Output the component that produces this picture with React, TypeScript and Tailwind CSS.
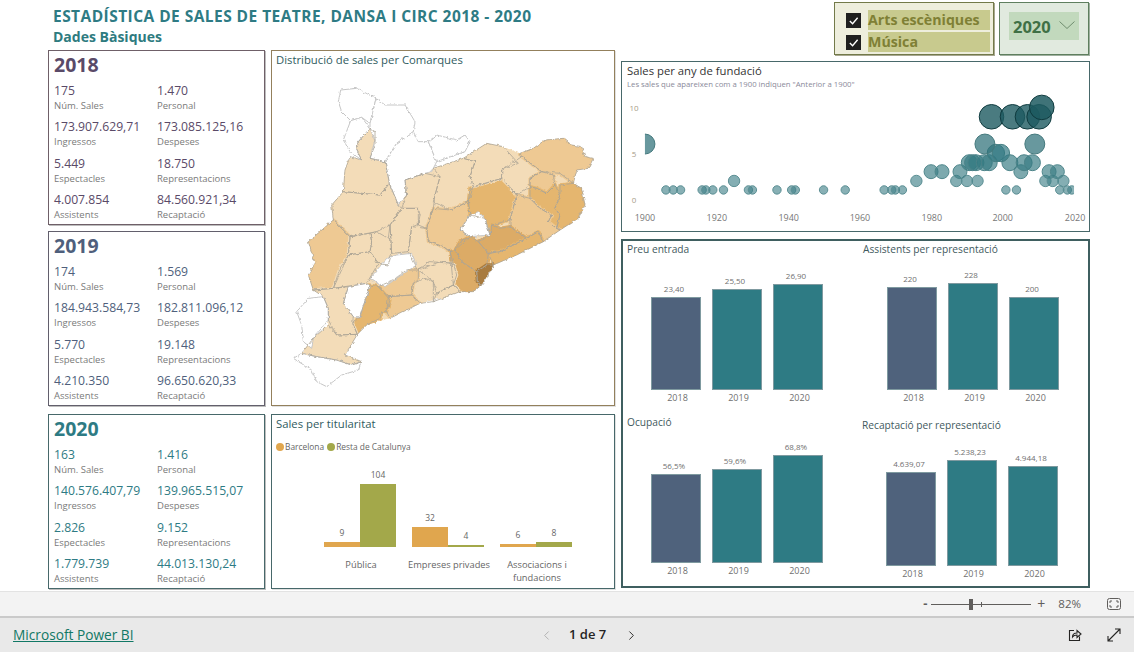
import { ChevronLeft, ChevronRight } from 'lucide-react';

type Kpi = { value: string; label: string };

type YearCard = {
  year: string;
  rows: Kpi[][];
};

const LIGHT = '#f3dcb8';
const MEDIUM = '#eec993';
const DARK = '#e5b66f';
const DARKER = '#dcab66';
const DARKEST = '#a87b3f';
const NONE = '#ffffff';

function kpis(v: string[]): Kpi[][] {
  return [
    [{ value: v[0], label: 'Núm. Sales' }, { value: v[1], label: 'Personal' }],
    [{ value: v[2], label: 'Ingressos' }, { value: v[3], label: 'Despeses' }],
    [{ value: v[4], label: 'Espectacles' }, { value: v[5], label: 'Representacions' }],
    [{ value: v[6], label: 'Assistents' }, { value: v[7], label: 'Recaptació' }],
  ];
}

const card2018: YearCard = {
  year: '2018',
  rows: kpis(['175', '1.470', '173.907.629,71', '173.085.125,16', '5.449', '18.750', '4.007.854', '84.560.921,34']),
};
const card2019: YearCard = {
  year: '2019',
  rows: kpis(['174', '1.569', '184.943.584,73', '182.811.096,12', '5.770', '19.148', '4.210.350', '96.650.620,33']),
};
const card2020: YearCard = {
  year: '2020',
  rows: kpis(['163', '1.416', '140.576.407,79', '139.965.515,07', '2.826', '9.152', '1.779.739', '44.013.130,24']),
};

// neighbouring shapes were traced apart, so pull close vertices onto one point
const knownVertices: [number, number][] = [];
function snap(points: string): string {
  return points
    .split(' ')
    .map((pair) => {
      const [x, y] = pair.split(',').map(Number);
      const hit = knownVertices.find(([kx, ky]) => Math.hypot(kx - x, ky - y) < 11);
      if (hit) return hit.join(',');
      knownVertices.push([x, y]);
      return pair;
    })
    .join(' ');
}

// comarques, traced by hand from the map
const regions: [string, string][] = (
  [
    [LIGHT, '300,250 315,260 315,300 300,340 345,350 355,395 358,415 330,450 220,440 225,375 240,335 275,345 260,315 265,290'],
    [LIGHT, '490,370 580,340 615,350 600,395 610,425 595,470 540,495 510,480 490,470 510,395'],
    [LIGHT, '405,405 465,385 510,395 495,450 490,490 470,550 445,540 445,490 395,490 410,450'],
    [LIGHT, '220,440 330,450 358,415 385,480 395,490 360,540 355,580 320,560 240,575 190,525 185,480'],
    [MEDIUM, '190,525 240,580 235,630 190,730 130,735 115,690 135,655 115,590'],
    [LIGHT, '240,575 300,565 305,590 300,620 240,630'],
    [LIGHT, '300,565 325,560 360,545 365,625 355,660 325,655 300,620 310,590'],
    [LIGHT, '360,540 395,490 445,490 450,510 445,540 425,545 415,620 360,628 365,625'],
    [LIGHT, '240,630 300,620 325,655 290,715 190,730 210,670'],
    [LIGHT, '430,545 470,550 475,590 520,605 540,620 550,655 510,650 445,675 415,615'],
    [MEDIUM, '490,490 540,495 595,470 600,510 570,555 600,575 555,615 540,620 520,605 475,590 470,550'],
    [DARK, '600,430 695,400 740,450 720,525 665,540 660,570 650,570 645,520 600,500 595,470'],
    [LIGHT, '585,345 650,295 700,305 745,355 695,375 695,400 610,415 600,395 610,350'],
    [LIGHT, '695,375 755,335 815,380 780,400 780,425 750,450 715,420 695,400'],
    [MEDIUM, '750,325 790,310 825,285 880,280 905,300 935,305 945,335 970,340 955,370 920,375 910,415 870,385 815,385 755,335'],
    [MEDIUM, '780,400 815,385 850,390 855,420 830,445 800,430 780,425'],
    [DARK, '780,430 800,430 830,445 855,420 870,450 855,490 870,510 860,550 835,530 845,510 810,490 780,460'],
    [DARK, '870,420 910,415 935,430 945,480 925,520 870,555 860,550 870,510 855,490 870,450'],
    [MEDIUM, '750,450 780,460 810,490 845,510 835,530 860,550 870,555 820,590 805,560 770,580 720,545 720,525'],
    [DARKER, '665,540 690,550 720,545 770,580 730,600 690,620 655,625 625,590 660,570'],
    [DARK, '770,580 805,560 820,590 740,630 670,660 655,630 690,620 730,600'],
    [DARKER, '570,590 600,575 625,590 655,625 650,660 620,680 575,650 555,620'],
    [DARKER, '540,620 555,620 575,650 620,680 622,710 635,720 610,740 570,740 550,720'],
    [DARKEST, '650,665 670,660 650,700 635,720 622,710 625,685'],
    [LIGHT, '445,680 480,650 555,660 560,690 550,720 500,745 490,710'],
    [LIGHT, '500,745 550,720 575,740 530,755 490,770'],
    [LIGHT, '430,715 465,700 490,720 495,765 450,775 425,750'],
    [MEDIUM, '325,725 370,705 410,675 445,675 445,700 425,720 420,755 355,755'],
    [MEDIUM, '355,765 420,755 450,775 420,790 360,820 350,800'],
    [DARK, '300,720 325,725 360,765 350,800 335,800 330,820 290,840 262,868 248,835 270,815'],
    [LIGHT, '130,735 190,730 235,725 220,775 250,815 248,835 262,868 200,870 175,825 175,790 160,755'],
    [LIGHT, '130,880 175,840 200,870 265,868 225,930 275,950 245,960 200,945 140,935 95,925'],
    [NONE, '212,135 260,130 318,160 300,235 275,217 242,227 215,200 205,170'],
    [NONE, '318,160 345,180 405,180 435,230 430,260 380,295 345,350 300,340 315,285 300,245 300,235'],
    [NONE, '242,227 275,217 300,240 265,290 260,315 275,345 240,320 220,285'],
    [NONE, '430,260 445,290 475,290 500,350 485,380 460,385 405,405 415,450 385,480 355,415 350,355 380,295'],
    [NONE, '475,290 500,270 560,285 585,270 600,290 585,320 510,350 500,350'],
    [NONE, '600,510 625,500 645,520 650,570 662,573 600,575 570,555'],
    [NONE, '300,700 350,640 380,630 425,625 440,660 380,700 345,725 315,710'],
    [NONE, '235,725 290,715 300,725 270,810 250,815 220,775'],
    [NONE, '115,760 160,755 175,790 175,825 125,880 125,910 100,890 95,840 80,800'],
    [NONE, '70,940 95,925 140,935 200,945 245,960 275,950 265,975 215,990 170,1025 140,1010 125,975'],
  ] as [string, string][]
).map(([fill, points]) => [fill, snap(points)]);

// outer edge of the coloured comarques
const silhouette = snap(
  '300,250 315,260 315,300 300,340 345,350 355,395 385,480 405,405 465,385 490,370 580,340 585,345 650,295 700,305 750,325 790,310 825,285 880,280 905,300 935,305 945,335 970,340 955,370 920,375 910,415 935,430 945,480 925,520 870,555 820,590 740,630 670,660 635,720 610,740 570,740 530,755 450,775 420,790 360,820 290,840 262,868 225,930 275,950 245,960 200,945 140,935 95,925 130,880 175,840 175,790 160,755 130,735 115,690 135,655 115,590 190,525 185,480 220,440 225,375 240,335 275,345 260,315 265,290',
);

const colouredRegions = regions.filter(([fill]) => fill !== NONE);
const emptyRegions = regions.filter(([fill]) => fill === NONE);

// bubble chart rows, one per number of sales
const bubbleRows: { y: number; r: number; fill: string; opacity: number; stroke: string; xs: number[] }[] = [
  { y: 190, r: 4.2, fill: '#3f8088', opacity: 0.62, stroke: '#5b8f94', xs: [666, 673.3, 680.7, 702.3, 706, 713, 723.7, 748.7, 752.7, 777.3, 792, 795.7, 824, 845.7, 884.7, 892.3, 896, 903, 1006.7, 1017.3, 1060.7, 1068.3, 1072.7] },
  { y: 181, r: 5.7, fill: '#3f8088', opacity: 0.64, stroke: '#5b8f94', xs: [734.3, 917, 957, 967.7, 978.3, 1046.3, 1053.7, 1064.3] },
  { y: 171.7, r: 7, fill: '#3a7c84', opacity: 0.66, stroke: '#4f878c', xs: [931.7, 942.7, 960.7, 1021.7, 1050, 1058.3] },
  { y: 162.7, r: 8, fill: '#357a82', opacity: 0.68, stroke: '#4a8288', xs: [970, 973.3, 976.7, 985, 990, 1010.7, 1025, 1033.3] },
  { y: 153, r: 8.7, fill: '#317881', opacity: 0.7, stroke: '#447d82', xs: [996.7, 1001.7] },
  { y: 144, r: 10, fill: '#2e7079', opacity: 0.72, stroke: '#44787c', xs: [645, 985.7, 1035.7] },
  { y: 116.7, r: 12.3, fill: '#1d5a60', opacity: 0.8, stroke: '#0f3a3e', xs: [992.3, 1013.3, 1028.3, 1040] },
  { y: 107.3, r: 12.3, fill: '#1d5a60', opacity: 0.85, stroke: '#0f3a3e', xs: [1042.7] },
];

function KpiCard({ card, border, valueColor }: { card: YearCard; border: string; valueColor: string }) {
  return (
    <div className={`h-[175px] w-[217px] border px-[5px] pt-[2px] shadow-[1px_1px_0_#bdbdbd] ${border} ${valueColor}`}>
      <div className="h-[27px] text-[19.5px] leading-[24px] font-bold">{card.year}</div>
      <div className="mt-[1px] flex flex-col">
        {card.rows.map((row) => (
          <div key={row[0].label} className="grid h-[36.3px] grid-cols-[103px_1fr]">
            {row.map((kpi) => (
              <div key={kpi.label}>
                <div className="h-[19px] text-[12.2px] leading-[19px] whitespace-nowrap">{kpi.value}</div>
                <div className="text-[9.5px] leading-[12px] whitespace-nowrap text-[#7a7a7a]">{kpi.label}</div>
              </div>
            ))}
          </div>
        ))}
      </div>
    </div>
  );
}

function MapPanel() {
  return (
    <div className="h-[356px] border border-[#93805c] shadow-[1px_1px_0_#e0e0e0]">
      <div className="h-[22px] pl-[4px] text-[11.3px] leading-[18px] text-[#2f5b60]">Distribució de sales per Comarques</div>
      <svg viewBox="6 84 1023 996" className="block h-[332px] w-[341px]">
        <defs>
          <filter id="rough" x="-5%" y="-5%" width="110%" height="110%" colorInterpolationFilters="sRGB">
            <feTurbulence type="fractalNoise" baseFrequency="0.09" numOctaves="2" seed="4" result="noise" />
            <feDisplacementMap in="SourceGraphic" in2="noise" scale="10" xChannelSelector="R" yChannelSelector="G" />
            <feGaussianBlur stdDeviation="0.9" />
          </filter>
          <clipPath id="land">
            <polygon points={silhouette} />
          </clipPath>
        </defs>
        <g filter="url(#rough)" strokeLinejoin="round">
          {/* wide strokes close the small gaps between the traced shapes */}
          <g clipPath="url(#land)">
            <polygon points={silhouette} fill={LIGHT} />
            {colouredRegions.map(([fill, points]) => (
              <polygon key={points} points={points} fill={fill} stroke={fill} strokeWidth={10} />
            ))}
          </g>
          {emptyRegions.map(([, points]) => (
            <polygon key={points} points={points} fill={NONE} stroke="#c6c6c6" strokeWidth={3} />
          ))}
          {colouredRegions.map(([, points]) => (
            <polygon key={points} points={points} fill="none" stroke="#aca496" strokeWidth={2.4} />
          ))}
        </g>
      </svg>
    </div>
  );
}

function OwnershipPanel() {
  const groups = [
    { name: ['Pública'], a: 5, b: 63, av: '9', bv: '104' },
    { name: ['Empreses privades'], a: 20, b: 2.5, av: '32', bv: '4' },
    { name: ['Associacions i', 'fundacions'], a: 3.5, b: 5, av: '6', bv: '8' },
  ];
  return (
    <div className="mt-2 flex h-[175px] flex-col border border-[#47686a] shadow-[1px_1px_0_#e0e0e0]">
      <div className="h-[20px] pl-[4px] text-[11.3px] leading-[18px] text-[#2f5b60]">Sales per titularitat</div>
      <div className="mt-[3px] flex h-[18px] items-center pl-[4px] text-[8.4px] text-[#666]">
        <span className="mr-px h-2 w-2 rounded-full bg-[#e0a64e]" />
        <span className="mr-[3px]">Barcelona</span>
        <span className="mr-px h-2 w-2 rounded-full bg-[#a3a84a]" />
        <span>Resta de Catalunya</span>
      </div>
      <div className="ml-[52px] flex gap-[16px]">
        {groups.map((g) => (
          <div key={g.name[0]} className="w-[72px]">
            <div className="flex h-[91px] items-end">
              {[
                { h: g.a, v: g.av, color: 'bg-[#e0a64e]' },
                { h: g.b, v: g.bv, color: 'bg-[#a3a84a]' },
              ].map((bar) => (
                <div key={bar.color} className="w-[36px]">
                  <div className="mb-[4px] text-center text-[8.5px] leading-[11px] text-[#666]">{bar.v}</div>
                  <div className={bar.color} style={{ height: bar.h }} />
                </div>
              ))}
            </div>
            <div className="-mx-3 mt-[11px] pl-[2px] text-center text-[9.3px] leading-[13px] whitespace-nowrap text-[#666]">
              {g.name.map((line) => (
                <div key={line}>{line}</div>
              ))}
            </div>
          </div>
        ))}
      </div>
    </div>
  );
}

function FoundationPanel() {
  const years = [
    [645, '1900'],
    [717, '1920'],
    [789, '1940'],
    [860.5, '1960'],
    [932.5, '1980'],
    [1003.5, '2000'],
    [1076, '2020'],
  ] as const;
  return (
    <div className="h-[171px] border-[1.5px] border-[#47686a] bg-white">
      <div className="h-[28px] pl-[5px]">
        <div className="h-[16px] text-[11.3px] leading-[18px] text-[#333]">Sales per any de fundació</div>
        <div className="text-[7.75px] leading-[12px] whitespace-nowrap text-[#8a8a9a]">Les sales que apareixen com a 1900 indiquen "Anterior a 1900"</div>
      </div>
      <svg viewBox="622 90 467 141" className="block h-[141px] w-[466px]">
        <defs>
          <clipPath id="plot">
            <rect x="645" y="90" width="430" height="120" />
          </clipPath>
        </defs>
        {[
          [107.5, '10'],
          [154, '5'],
          [200.5, '0'],
        ].map(([y, label]) => (
          <text key={label} x="634" y={Number(y) + 3} fontSize="8" textAnchor="middle" fill="#a79c88">
            {label}
          </text>
        ))}
        {years.map(([x, label]) => (
          <text key={label} x={x} y="221.5" fontSize="9" textAnchor="middle" fill="#777">
            {label}
          </text>
        ))}
        <g clipPath="url(#plot)">
          {bubbleRows.flatMap((row) =>
            row.xs.map((x) => (
              <circle
                key={`${row.y}-${x}`}
                cx={x}
                cy={row.y}
                r={row.r}
                fill={row.fill}
                fillOpacity={row.opacity}
                stroke={row.stroke}
                strokeWidth={1}
              />
            )),
          )}
        </g>
      </svg>
    </div>
  );
}

type Bar = { year: string; label: string; height: number };

function ColumnChart({ title, bars, titleClass, plotClass, bottomClass }: {
  title: string;
  bars: Bar[];
  titleClass: string;
  plotClass: string;
  bottomClass: string;
}) {
  return (
    <div className={`flex flex-col justify-between ${bottomClass}`}>
      <div className={`text-[10.2px] leading-[14px] whitespace-nowrap text-[#3f5a5e] ${titleClass}`}>{title}</div>
      <div className={`flex items-end gap-[11px] ${plotClass}`}>
        {bars.map((bar) => (
          <div key={bar.year} className="w-[50px]">
            <div className="-mx-2 mb-[3px] pr-[4px] text-center text-[8px] leading-[11px] text-[#6f6f6f]">{bar.label}</div>
            <div className={`border border-[#7f9aa0] ${bar.year === '2018' ? 'bg-[#4f627c]' : 'bg-[#2e7b84]'}`} style={{ height: bar.height }} />
            <div className="h-[16px] pl-[3px] text-center text-[9px] leading-[16px] text-[#6f6f6f]">{bar.year}</div>
          </div>
        ))}
      </div>
    </div>
  );
}

function ChartsPanel() {
  return (
    <div className="mt-[7px] grid h-[349px] grid-cols-[236px_1fr] grid-rows-[171px_1fr] border-2 border-[#3f5f60] bg-white pt-px">
      <ColumnChart
        title="Preu entrada"
        titleClass="pl-[4px]"
        plotClass="pl-[28px]"
        bottomClass="pb-[7px]"
        bars={[
          { year: '2018', label: '23,40', height: 93 },
          { year: '2019', label: '25,50', height: 101 },
          { year: '2020', label: '26,90', height: 106 },
        ]}
      />
      <ColumnChart
        title="Assistents per representació"
        titleClass="pl-[4px]"
        plotClass="pl-[28px]"
        bottomClass="pb-[7px]"
        bars={[
          { year: '2018', label: '220', height: 103 },
          { year: '2019', label: '228', height: 107 },
          { year: '2020', label: '200', height: 93 },
        ]}
      />
      <ColumnChart
        title="Ocupació"
        titleClass="pl-[4px] pt-[2px]"
        plotClass="pl-[28px]"
        bottomClass="pb-[7px]"
        bars={[
          { year: '2018', label: '56,5%', height: 89 },
          { year: '2019', label: '59,6%', height: 94 },
          { year: '2020', label: '68,8%', height: 108 },
        ]}
      />
      <ColumnChart
        title="Recaptació per representació"
        titleClass="pl-[3px] pt-[5px]"
        plotClass="pl-[27px]"
        bottomClass="pb-[4px]"
        bars={[
          { year: '2018', label: '4.639,07', height: 94 },
          { year: '2019', label: '5.238,23', height: 106 },
          { year: '2020', label: '4.944,18', height: 100 },
        ]}
      />
    </div>
  );
}

function Slicers() {
  return (
    <div className="flex h-[61px] gap-[5px] pt-[2px] pl-[213px]">
      <div className="h-[53px] w-[160px] border border-[#737a4a] bg-[#eeeedd] pt-[7px] pl-[11px] shadow-[1px_1px_0_#a8a890]">
        {['Arts escèniques', 'Música'].map((name) => (
          <div key={name} className="mb-[2px] flex h-[20px] items-center">
            <span className="flex h-[15px] w-[15px] items-center justify-center bg-[#1f1f1f]">
              <svg viewBox="0 0 12 12" className="h-[11px] w-[11px]">
                <path d="M2 6.5 L5 9.5 L10.5 3" fill="none" stroke="#fff" strokeWidth="1.5" />
              </svg>
            </span>
            <span className="ml-[7px] flex h-[20px] w-[122px] items-center bg-[#c8ca8e] text-[14.2px] font-bold text-[#7f8035]">{name}</span>
          </div>
        ))}
      </div>
      <div className="h-[53px] w-[90px] border border-[#5f7f5f] bg-[#e1eadf] pt-[9px] pl-[9px] shadow-[1px_1px_0_#a0b0a0]">
        <div className="flex h-[28px] w-[70px] items-center justify-between bg-[#c2d9bd] pr-[4px] pl-[4px]">
          <span className="pt-[3px] text-[16.5px] font-bold text-[#3f7045]">2020</span>
          <svg viewBox="0 0 16 8" className="mb-[3px] h-[8px] w-[16px]">
            <path d="M0.5 0.5 L8 7.5 L15.5 0.5" fill="none" stroke="#5a7a5a" strokeWidth="0.8" />
          </svg>
        </div>
      </div>
    </div>
  );
}

function ZoomBar() {
  return (
    <div className="flex h-[25px] items-center justify-end border-t border-[#e3e3e3] bg-[#f3f3f3] pr-[13px] text-[#605e5c]">
      <span className="text-[13px] font-bold">-</span>
      <div className="relative mx-[4px] h-px w-[100px] bg-[#605e5c]">
        <span className="absolute top-[-5px] left-[38px] h-[11px] w-[4px] bg-[#605e5c]" />
        <span className="absolute top-[-2px] left-[50px] h-[5px] w-px bg-[#605e5c]" />
      </div>
      <span className="ml-[2px] text-[14px] leading-none">+</span>
      <span className="ml-[13px] text-[11.5px]">82%</span>
      <svg viewBox="0 0 14 12" className="ml-[26px] h-[12px] w-[14px]">
        <rect x="0.5" y="0.5" width="13" height="11" rx="2" fill="none" stroke="#605e5c" />
        <path d="M3 5 V3 H5 M9 3 H11 V5 M11 7 V9 H9 M5 9 H3 V7" fill="none" stroke="#605e5c" />
      </svg>
    </div>
  );
}

function PageBar() {
  return (
    <div className="flex h-[36px] items-center border-t-2 border-[#cacaca] bg-[#e9e9e9]">
      <a className="w-[539px] pl-[13px] text-[13.7px] text-[#117865] underline">Microsoft Power BI</a>
      <ChevronLeft className="h-[15px] w-[15px] text-[#a6a6a6]" strokeWidth={1.3} />
      <span className="ml-[15px] w-[55px] text-[13px] font-semibold whitespace-nowrap text-[#252423]">1 de 7</span>
      <ChevronRight className="h-[15px] w-[15px] text-[#252423]" strokeWidth={1.5} />
      <svg viewBox="0 0 14 14" className="ml-[429px] h-[14px] w-[14px]">
        <path d="M6 2.5 H1.5 V12.5 H11.5 V8.5" fill="none" stroke="#252423" strokeWidth="1.1" />
        <path d="M4.5 9 C4.5 6.5 6.5 5 9 5 V2.5 L13 6 L9 9.5 V7 C7 7 5.5 7.5 4.5 9 Z" fill="none" stroke="#252423" strokeWidth="1.1" />
      </svg>
      <svg viewBox="0 0 14 14" className="ml-[25px] h-[14px] w-[14px]">
        <path d="M1 13 L13 1 M8 1 H13 V6 M1 8 V13 H6" fill="none" stroke="#252423" strokeWidth="1.1" />
      </svg>
    </div>
  );
}

export default function App() {
  return (
    <div className="flex h-[652px] w-[1134px] flex-col overflow-hidden bg-white font-['Open_Sans','Noto_Sans',sans-serif]">
      <div className="flex h-[591px] pl-[48px]">
        <div className="w-[567px]">
          <div className="h-[50px] pl-[5px]">
            <div className="pt-[6px] text-[15.5px] leading-[21px] font-bold tracking-[0.45px] whitespace-nowrap text-[#2e7b84]">
              ESTADÍSTICA DE SALES DE TEATRE, DANSA I CIRC 2018 - 2020
            </div>
            <div className="text-[14px] leading-[20px] font-bold text-[#2e7b7f]">Dades Bàsiques</div>
          </div>
          <div className="flex gap-[6px]">
            <div className="flex flex-col gap-[6px]">
              <KpiCard card={card2018} border="border-[#6f6068]" valueColor="text-[#5a4a68]" />
              <KpiCard card={card2019} border="border-[#625f6c]" valueColor="text-[#4f5f7c]" />
              <div className="mt-[2px]">
                <KpiCard card={card2020} border="border-[#47686a]" valueColor="text-[#2e7b84]" />
              </div>
            </div>
            <div className="w-[344px]">
              <MapPanel />
              <OwnershipPanel />
            </div>
          </div>
        </div>
        <div className="ml-[6px] w-[469px]">
          <Slicers />
          <FoundationPanel />
          <ChartsPanel />
        </div>
      </div>
      <ZoomBar />
      <PageBar />
    </div>
  );
}
